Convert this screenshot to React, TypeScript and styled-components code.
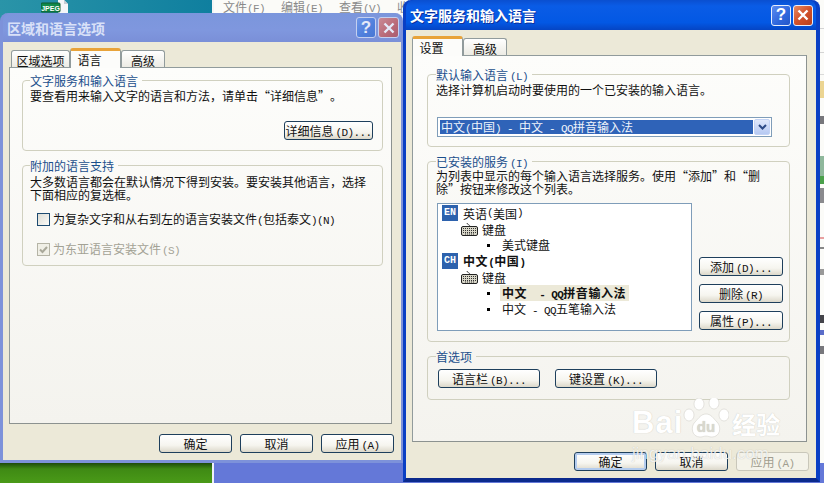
import React from 'react';
import styled, { createGlobalStyle } from 'styled-components';

const GlobalStyle = createGlobalStyle`
  html, body {
    margin: 0;
    padding: 0;
    background: #fff;
  }
  * {
    box-sizing: border-box;
  }
`;

const Desktop = styled.div`
  position: relative;
  width: 824px;
  height: 483px;
  overflow: hidden;
  font-family: 'Noto Sans CJK SC', 'Liberation Sans', sans-serif;
  font-size: 12px;
  line-height: 13px;
  color: #111;
`;

/* what shows behind the two dialogs */
const Backdrop = styled.div`
  display: grid;
  grid-template-columns: 212px 1fr;
  grid-template-rows: 1fr 20px;
  height: 100%;
`;

const Teal = styled.div`
  background: linear-gradient(90deg, #2a94a8, #0f7f9f);
  padding-left: 41px;
`;

const Explorer = styled.div`
  display: flex;
  border-left: 2px solid #f4f4f4;
  background: #fbfbf8;
  padding-left: 9px;
  color: #8a8a8a;
`;

const MenuItem = styled.span`
  width: 58px;
  height: 13px;
  white-space: nowrap;
`;

const Grass = styled.div`
  background: linear-gradient(180deg, #1d4a0c 0, #3f8a14 30%, #4a9a18 100%);
`;

const BlueBar = styled.div`
  border-left: 2px solid #eef0fa;
  background: #6478d8;
`;

const Crumbs = styled.div`
  position: absolute;
  top: 0;
  right: 0;
  width: 4px;
  display: flex;
  flex-direction: column;
`;

const Crumb = styled.div<{ $gap: number; $h: number; $bg: string }>`
  margin-top: ${(p) => p.$gap}px;
  height: ${(p) => p.$h}px;
  background: ${(p) => p.$bg};
`;

/* windows sit on the desktop at their own place */
const Window = styled.section<{ $active?: boolean }>`
  position: absolute;
  display: flex;
  flex-direction: column;
  border-style: solid;
  border-top: 0;
  border-radius: 8px 8px 0 0;
  ${(p) =>
    p.$active
      ? `
    left: 403px;
    top: 0;
    width: 417px;
    height: 482px;
    border-width: 0 4px 4px 3px;
    border-color: #0a3fc4 #0a3fc4 #0b2a8c #0a3fc4;
    background: #0a3fc4;
  `
      : `
    left: 0;
    top: 13px;
    width: 403px;
    height: 450px;
    border-width: 0 2px 3px 3px;
    border-color: #7d92da;
    background: #7d92da;
  `}
`;

const TitleBar = styled.header<{ $active?: boolean }>`
  display: flex;
  align-items: center;
  justify-content: space-between;
  height: ${(p) => (p.$active ? 30 : 29)}px;
  padding: 0 ${(p) => (p.$active ? 3 : 2)}px 0 4px;
  border-radius: 8px 8px 0 0;
  background: ${(p) =>
    p.$active
      ? 'linear-gradient(180deg, #0a4fd0 0, #0a5ce6 20%, #0358e4 75%, #0545c4 100%)'
      : 'linear-gradient(180deg, #7b96dc 0, #7f97de 60%, #7a8fd8 100%)'};
`;

const TitleText = styled.h1<{ $active?: boolean }>`
  margin: 0;
  font-size: 14px;
  line-height: 20px;
  font-weight: 700;
  color: ${(p) => (p.$active ? '#fff' : '#d9e1f8')};
  text-shadow: ${(p) => (p.$active ? '1px 1px 0 #0a2f9c' : 'none')};
`;

const TitleButtons = styled.div`
  display: flex;
  gap: 2px;
`;

const CaptionButton = styled.button<{ $close?: boolean; $active?: boolean }>`
  width: ${(p) => (p.$active || !p.$close ? 20 : 21)}px;
  height: 21px;
  padding: 0;
  display: flex;
  align-items: center;
  justify-content: center;
  border: 1px solid ${(p) => (p.$active ? '#e8eefc' : '#c4d0f0')};
  border-radius: 3px;
  color: ${(p) => (p.$active ? '#fff' : '#e4e9f8')};
  font-family: 'Liberation Sans', sans-serif;
  font-weight: 700;
  font-size: 17px;
  background: ${(p) => {
    if (p.$close) {
      return p.$active
        ? 'linear-gradient(135deg, #e68a62, #d2512a 50%, #b8401e)'
        : 'linear-gradient(135deg, #c98a96, #b96a78 60%, #a95c70)';
    }
    return p.$active
      ? 'linear-gradient(135deg, #5c8cf0, #2f66dc 60%, #2456c8)'
      : 'linear-gradient(135deg, #6f97e8, #4f7fdc 60%, #4a78d4)';
  }};
`;

const Body = styled.div`
  flex: 1;
  display: flex;
  flex-direction: column;
  padding: 6px 7px 7px 6px;
  background: #ece9d8;
  min-height: 0;
`;

const TabStrip = styled.div<{ $inset: number }>`
  display: flex;
  align-items: flex-end;
  height: 19px;
  padding-left: ${(p) => p.$inset}px;
  position: relative;
  z-index: 1;
`;

const Tab = styled.div<{ $selected?: boolean; $w: number }>`
  width: ${(p) => p.$w}px;
  text-align: center;
  border-radius: 3px 3px 0 0;
  ${(p) =>
    p.$selected
      ? `
    height: 20px;
    margin-bottom: -1px;
    padding-top: 2px;
    padding-right: 12px;
    background: #fcfcfa;
    border: 1px solid #919b9c;
    border-bottom: 0;
    border-top: 3px solid #e8a33a;
    line-height: 13px;
  `
      : `
    height: 17px;
    padding-top: 3px;
    background: linear-gradient(180deg, #fff, #ecebe4);
    border: 1px solid #919b9c;
    border-bottom: 0;
  `}
`;

const Panel = styled.div`
  flex: 1;
  margin-right: 2px;
  display: flex;
  flex-direction: column;
  border: 1px solid #919b9c;
  border-right-color: #8c9290;
  border-bottom-color: #8c9290;
  background: linear-gradient(180deg, #fdfdfb 0, #f4f3ee 100%);
`;

const PanelInner = styled.div<{ $top: number; $left: number; $right: number; $gap: number }>`
  display: flex;
  flex-direction: column;
  gap: ${(p) => p.$gap}px;
  padding: ${(p) => p.$top}px ${(p) => p.$right}px 0 ${(p) => p.$left}px;
`;

const Group = styled.fieldset<{ $h: number; $pad?: number }>`
  height: ${(p) => p.$h}px;
  margin: 0;
  min-width: 0;
  padding: 0 ${(p) => p.$pad ?? 7}px;
  border: 1px solid #d0d0bf;
  border-radius: 4px;
`;

const GroupTitle = styled.legend`
  height: 13px;
  margin-left: 0;
  padding: 0 4px 0 0;
  line-height: 13px;
  color: #1b4f8c;
`;

const Text = styled.p<{ $top: number }>`
  margin: ${(p) => p.$top}px 0 0;
  white-space: nowrap;
`;

/* latin part of a label: half width, like the Windows system font */
const Latin = styled.span<{ $gap?: number }>`
  margin-left: ${(p) => p.$gap ?? 0}px;
  font-family: 'Liberation Mono', monospace;
  font-size: 11px;
  line-height: 1;
  letter-spacing: -0.6px;
  white-space: pre;
`;

/* the quotes take a whole cell in the reference */
const Quote = styled.span<{ $close?: boolean }>`
  display: inline-block;
  width: 12px;
  text-align: ${(p) => (p.$close ? 'left' : 'right')};
`;

const Button = styled.button<{ $w: number; $default?: boolean; $disabled?: boolean }>`
  width: ${(p) => p.$w}px;
  height: 19px;
  padding: 0;
  flex: none;
  font: inherit;
  line-height: 15px;
  white-space: nowrap;
  color: ${(p) => (p.$disabled ? '#a19e8f' : '#111')};
  border: 1px solid ${(p) => (p.$disabled ? '#c9c7ba' : '#1e3f5c')};
  border-radius: 3px;
  background: ${(p) =>
    p.$disabled
      ? '#f4f3ea'
      : 'linear-gradient(180deg, #fff 0, #f6f5ef 60%, #dcd8ca 100%)'};
  box-shadow: ${(p) =>
    p.$default ? 'inset 0 0 0 2px #b4ccee' : 'none'};
`;

const DetailRow = styled.div`
  display: flex;
  justify-content: flex-end;
  margin: 19px 2px 0 0;
`;

const CheckRow = styled.label<{ $top: number; $disabled?: boolean }>`
  display: flex;
  align-items: center;
  gap: 3px;
  height: 13px;
  margin: ${(p) => p.$top}px 0 0 7px;
  white-space: nowrap;
  color: ${(p) => (p.$disabled ? '#a3a295' : '#111')};
`;

const CheckLabel = styled.span`
  line-height: 13px;
`;

const CheckBox = styled.span<{ $disabled?: boolean }>`
  flex: none;
  display: flex;
  width: 13px;
  height: 13px;
  border: 1px solid ${(p) => (p.$disabled ? '#b5b4a6' : '#1c4a70')};
  background: ${(p) =>
    p.$disabled ? '#f0efe6' : 'linear-gradient(135deg, #dcdcd4, #fbfbf8)'};
`;

const Select = styled.div`
  display: flex;
  align-items: center;
  justify-content: space-between;
  width: 335px;
  height: 20px;
  margin: 21px 0 0 1px;
  padding: 0 1px 0 2px;
  border: 1px solid #7f9db9;
  background: #fff;
`;

const SelectValue = styled.div`
  width: 313px;
  height: 14px;
  padding-left: 1px;
  line-height: 14px;
  white-space: nowrap;
  color: #eef3fb;
  background: #2f63b8;
`;

const SelectArrow = styled.div`
  display: flex;
  align-items: center;
  justify-content: center;
  width: 16px;
  height: 16px;
  border-radius: 2px;
  background: linear-gradient(180deg, #dfe8fb, #b6c9f2);
  border: 1px solid #c3d3f5;
`;

const ServiceRow = styled.div`
  display: flex;
  align-items: flex-end;
  gap: 7px;
  margin: 8px -3px 0 1px;
`;

const Tree = styled.div`
  flex: none;
  width: 255px;
  height: 128px;
  padding: 1px 0 0 4px;
  border: 1px solid #7f9db9;
  background: #fff;
`;

const TreeRow = styled.div<{ $indent: number }>`
  display: flex;
  align-items: center;
  height: 16px;
  padding-left: ${(p) => p.$indent}px;
  white-space: pre;
`;

const LangBadge = styled.span`
  flex: none;
  width: 16px;
  height: 16px;
  margin-right: 5px;
  text-align: center;
  line-height: 16px;
  font-family: 'Liberation Mono', monospace;
  font-size: 10px;
  font-weight: 700;
  color: #fff;
  background: #2d62ad;
`;

const KeyboardGlyph = styled.svg`
  flex: none;
  margin-right: 4px;
`;

const Bullet = styled.span`
  flex: none;
  width: 3px;
  height: 3px;
  margin-right: 10px;
  background: #000;
`;

const ItemLabel = styled.span<{ $bold?: boolean; $highlight?: boolean }>`
  height: 16px;
  line-height: 16px;
  padding: ${(p) => (p.$highlight ? '0 3px 0 2px' : '0 0 0 2px')};
  font-weight: ${(p) => (p.$bold ? 700 : 400)};
  letter-spacing: ${(p) => (p.$bold ? 0.6 : 0)}px;
  background: ${(p) => (p.$highlight ? '#ece9d8' : 'transparent')};
`;

const LangName = styled.strong`
  letter-spacing: 0.6px;
`;

const SideButtons = styled.div`
  display: flex;
  flex-direction: column;
  gap: 8px;
  margin-bottom: 1px;
`;

const PrefRow = styled.div`
  display: flex;
  gap: 15px;
  margin: 6px 0 0 2px;
`;

const Footer = styled.footer`
  display: flex;
  justify-content: flex-end;
  gap: 8px;
  margin-top: 10px;
`;

const Watermark = styled.div`
  position: absolute;
  left: 632px;
  top: 398px;
  width: 150px;
  height: 68px;
  color: #fff;
  pointer-events: none;
  text-shadow: 0 0 1px rgba(110, 110, 100, 0.4);
  display: flex;
  flex-direction: column;
`;

const MarkLine = styled.div`
  display: flex;
  align-items: flex-end;
  height: 41px;
  white-space: nowrap;
`;

const MarkBai = styled.span`
  font-family: 'Liberation Sans', sans-serif;
  font-weight: 700;
  font-size: 31px;
  line-height: 32px;
  letter-spacing: 1px;
`;

const MarkCjk = styled.span`
  margin-left: 3px;
  font-size: 24px;
  line-height: 30px;
  font-weight: 700;
`;

const MarkUrl = styled.div`
  margin-top: 5px;
  font-family: 'Liberation Sans', sans-serif;
  font-size: 17px;
  line-height: 20px;
  color: rgba(255, 255, 255, 0.8);
  white-space: nowrap;
`;

const crumbs = [
  { gap: 28, h: 1, bg: '#d4d4d4' },
  { gap: 23, h: 1, bg: '#d4d4d4' },
  { gap: 21, h: 1, bg: '#dadada' },
  { gap: 6, h: 17, bg: '#ecd592' },
  { gap: 18, h: 8, bg: '#77777c' },
  { gap: 32, h: 20, bg: '#8fb89c' },
  { gap: 0, h: 8, bg: '#4aa04a' },
  { gap: 4, h: 15, bg: '#8a8a8e' },
  { gap: 34, h: 2, bg: '#e8a0a0' },
  { gap: 8, h: 2, bg: '#888' },
  { gap: 20, h: 6, bg: '#999' },
  { gap: 40, h: 8, bg: '#44444a' },
  { gap: 7, h: 5, bg: '#5a6cc8' },
  { gap: 11, h: 8, bg: '#77777c' },
];

const Keyboard = () => (
  <KeyboardGlyph width="17" height="14" viewBox="0 0 17 14">
    <path d="M9 5 C9 2 6 3 6 1" fill="none" stroke="#444" strokeWidth="1" />
    <rect x="0.5" y="4.5" width="16" height="9" rx="1.5" fill="#d8d6c8" stroke="#222" />
    <path d="M2 6.5h13M2 8.5h13M2 10.5h13M4 12h9" stroke="#333" strokeWidth="1" strokeDasharray="1 1" />
  </KeyboardGlyph>
);

const Chevron = () => (
  <svg width="9" height="7" viewBox="0 0 9 7">
    <path d="M1 1l3.5 3.5L8 1" fill="none" stroke="#2c4a86" strokeWidth="2" />
  </svg>
);

const CloseGlyph = () => (
  <svg width="12" height="12" viewBox="0 0 12 12">
    <path d="M1.5 1.5l9 9M10.5 1.5l-9 9" stroke="currentColor" strokeWidth="2.4" />
  </svg>
);

const GrayTick = () => (
  <svg width="11" height="11" viewBox="0 0 11 11">
    <path d="M2 5.5l2.5 2.5L9 3" fill="none" stroke="#a9a89a" strokeWidth="2" />
  </svg>
);

const JpegIcon = () => (
  <svg width="27" height="13" viewBox="0 0 27 13">
    <path d="M17 0h6l4 4v9H17z" fill="#f4f6f8" />
    <path d="M23 0v4h4" fill="#c6ccd4" />
    <rect x="0" y="3" width="19" height="9" rx="1" fill="#128a4a" stroke="#0a5a30" />
    <text x="9.5" y="10.5" fontFamily="Liberation Sans" fontSize="7" fontWeight="700" fill="#fff" textAnchor="middle">
      JPEG
    </text>
  </svg>
);

const Paw = () => (
  <svg width="46" height="41" viewBox="0 0 46 41" fill="#fff" stroke="#b9b8ae" strokeOpacity="0.35">
    <ellipse cx="6" cy="17" rx="5" ry="6" />
    <ellipse cx="16" cy="6" rx="5" ry="6" />
    <ellipse cx="31" cy="5" rx="5" ry="6" />
    <ellipse cx="41" cy="17" rx="5" ry="6" />
    <path d="M23 16c5 0 7 4 11 8 5 5 3 15-5 15-3 0-4-1-6-1s-3 1-6 1c-8 0-10-10-5-15 4-4 6-8 11-8z" />
    <text x="23" y="34" fontFamily="Liberation Sans" fontSize="15" fontWeight="700" fill="#d9d8ce" stroke="none" textAnchor="middle">
      du
    </text>
  </svg>
);

export default function App() {
  return (
    <Desktop lang="zh-CN">
      <GlobalStyle />
      <Backdrop>
        <Teal>
          <JpegIcon />
        </Teal>
        <Explorer>
          <MenuItem>文件<Latin>(F)</Latin></MenuItem>
          <MenuItem>编辑<Latin>(E)</Latin></MenuItem>
          <MenuItem>查看<Latin>(V)</Latin></MenuItem>
          <MenuItem>收</MenuItem>
        </Explorer>
        <Grass />
        <BlueBar />
      </Backdrop>
      <Crumbs>
        {crumbs.map((c, i) => (
          <Crumb key={i} $gap={c.gap} $h={c.h} $bg={c.bg} />
        ))}
      </Crumbs>

      <Window>
        <TitleBar>
          <TitleText>区域和语言选项</TitleText>
          <TitleButtons>
            <CaptionButton>?</CaptionButton>
            <CaptionButton $close>
              <CloseGlyph />
            </CaptionButton>
          </TitleButtons>
        </TitleBar>
        <Body>
          <TabStrip $inset={2}>
            <Tab $w={59}>区域选项</Tab>
            <Tab $w={51} $selected>语言</Tab>
            <Tab $w={44}>高级</Tab>
          </TabStrip>
          <Panel>
            <PanelInner $top={6} $left={12} $right={8} $gap={8}>
              <Group $h={77}>
                <GroupTitle>文字服务和输入语言</GroupTitle>
                <Text $top={2}>
                  要查看用来输入文字的语言和方法，请单击<Quote>“</Quote>详细信息<Quote $close>”</Quote>。
                </Text>
                <DetailRow>
                  <Button $w={89}>详细信息<Latin $gap={2}>(D)...</Latin></Button>
                </DetailRow>
              </Group>
              <Group $h={107}>
                <GroupTitle>附加的语言支持</GroupTitle>
                <Text $top={3}>
                  大多数语言都会在默认情况下得到安装。要安装其他语言，选择
                  <br />
                  下面相应的复选框。
                </Text>
                <CheckRow $top={12}>
                  <CheckBox />
                  <CheckLabel>
                    为复杂文字和从右到左的语言安装文件<Latin>(</Latin>包括泰文<Latin>)(N)</Latin>
                  </CheckLabel>
                </CheckRow>
                <CheckRow $top={17} $disabled>
                  <CheckBox $disabled>
                    <GrayTick />
                  </CheckBox>
                  <CheckLabel>为东亚语言安装文件<Latin $gap={1}>(S)</Latin></CheckLabel>
                </CheckRow>
              </Group>
            </PanelInner>
          </Panel>
          <Footer>
            <Button $w={73}>确定</Button>
            <Button $w={73}>取消</Button>
            <Button $w={73}>应用<Latin $gap={2}>(A)</Latin></Button>
          </Footer>
        </Body>
      </Window>

      <Window $active>
        <TitleBar $active>
          <TitleText $active>文字服务和输入语言</TitleText>
          <TitleButtons>
            <CaptionButton $active>?</CaptionButton>
            <CaptionButton $active $close>
              <CloseGlyph />
            </CaptionButton>
          </TitleButtons>
        </TitleBar>
        <Body>
          <TabStrip $inset={0}>
            <Tab $w={51} $selected>设置</Tab>
            <Tab $w={44}>高级</Tab>
          </TabStrip>
          <Panel>
            <PanelInner $top={12} $left={14} $right={16} $gap={8}>
              <Group $h={79} $pad={8}>
                <GroupTitle>默认输入语言<Latin $gap={2}>(L)</Latin></GroupTitle>
                <Text $top={2}>选择计算机启动时要使用的一个已安装的输入语言。</Text>
                <Select>
                  <SelectValue>
                    中文<Latin>(</Latin>中国<Latin>) - </Latin>中文<Latin> - QQ</Latin>拼音输入法
                  </SelectValue>
                  <SelectArrow>
                    <Chevron />
                  </SelectArrow>
                </Select>
              </Group>
              <Group $h={187} $pad={8}>
                <GroupTitle>已安装的服务<Latin $gap={2}>(I)</Latin></GroupTitle>
                <Text $top={1}>
                  为列表中显示的每个输入语言选择服务。使用<Quote>“</Quote>添加<Quote $close>”</Quote>和<Quote>“</Quote>删
                  <br />
                  除<Quote $close>”</Quote>按钮来修改这个列表。
                </Text>
                <ServiceRow>
                  <Tree>
                    <TreeRow $indent={0}>
                      <LangBadge>EN</LangBadge>英语<Latin>(</Latin>美国<Latin>)</Latin>
                    </TreeRow>
                    <TreeRow $indent={19}>
                      <Keyboard />键盘
                    </TreeRow>
                    <TreeRow $indent={45}>
                      <Bullet />
                      <ItemLabel>美式键盘</ItemLabel>
                    </TreeRow>
                    <TreeRow $indent={0}>
                      <LangBadge>CH</LangBadge>
                      <LangName>中文<Latin>(</Latin>中国<Latin>)</Latin></LangName>
                    </TreeRow>
                    <TreeRow $indent={19}>
                      <Keyboard />键盘
                    </TreeRow>
                    <TreeRow $indent={45}>
                      <Bullet />
                      <ItemLabel $bold $highlight>中文<Latin>  - QQ</Latin>拼音输入法</ItemLabel>
                    </TreeRow>
                    <TreeRow $indent={45}>
                      <Bullet />
                      <ItemLabel>中文<Latin> - QQ</Latin>五笔输入法</ItemLabel>
                    </TreeRow>
                  </Tree>
                  <SideButtons>
                    <Button $w={84}>添加<Latin $gap={2}>(D)...</Latin></Button>
                    <Button $w={84}>删除<Latin $gap={2}>(R)</Latin></Button>
                    <Button $w={84}>属性<Latin $gap={2}>(P)...</Latin></Button>
                  </SideButtons>
                </ServiceRow>
              </Group>
              <Group $h={50} $pad={8}>
                <GroupTitle>首选项</GroupTitle>
                <PrefRow>
                  <Button $w={102}>语言栏<Latin $gap={2}>(B)...</Latin></Button>
                  <Button $w={102}>键设置<Latin $gap={2}>(K)...</Latin></Button>
                </PrefRow>
              </Group>
            </PanelInner>
          </Panel>
          <Footer>
            <Button $w={73} $default>确定</Button>
            <Button $w={73}>取消</Button>
            <Button $w={73} $disabled>应用<Latin $gap={2}>(A)</Latin></Button>
          </Footer>
        </Body>
      </Window>

      <Watermark>
        <MarkLine>
          <MarkBai>Bai</MarkBai>
          <Paw />
          <MarkCjk>经验</MarkCjk>
        </MarkLine>
        <MarkUrl>jingyan.baidu.com</MarkUrl>
      </Watermark>
    </Desktop>
  );
}
